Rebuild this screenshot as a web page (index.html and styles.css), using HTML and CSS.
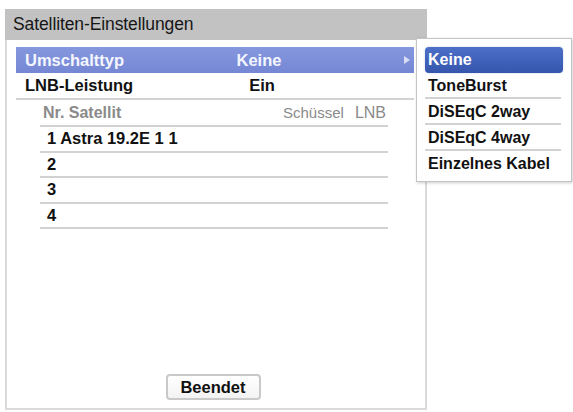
FILE: index.html
```html
<!DOCTYPE html>
<html lang="de">
<head>
<meta charset="utf-8">
<title>Satelliten-Einstellungen</title>
<link rel="stylesheet" href="styles.css">
</head>
<body>
<div class="screen">
  <div class="panel">
    <div class="title">Satelliten-Einstellungen</div>
    <div class="body">
      <div class="setting selected">
        <span class="label">Umschalttyp</span>
        <span class="value">Keine</span>
        <span class="arrow"></span>
      </div>
      <div class="setting divided">
        <span class="label">LNB-Leistung</span>
        <span class="value value-ein">Ein</span>
      </div>
      <div class="list">
        <div class="list-head">
          <span class="col-name">Nr. Satellit</span>
          <span class="col-dish">Schüssel</span>
          <span class="col-lnb">LNB</span>
        </div>
        <div class="list-row">1 Astra 19.2E 1 1</div>
        <div class="list-row">2</div>
        <div class="list-row">3</div>
        <div class="list-row">4</div>
      </div>
      <div class="actions">
        <button class="btn" type="button">Beendet</button>
      </div>
    </div>
  </div>
  <div class="menu">
    <div class="menu-item active">Keine</div>
    <div class="menu-item sep">ToneBurst</div>
    <div class="menu-item sep">DiSEqC 2way</div>
    <div class="menu-item sep">DiSEqC 4way</div>
    <div class="menu-item">Einzelnes Kabel</div>
  </div>
</div>
</body>
</html>
```
FILE: styles.css
```css
html, body {
  margin: 0;
  padding: 0;
  background: #ffffff;
}

body {
  font-family: "Liberation Sans", Arial, sans-serif;
  color: #111111;
}

.screen {
  position: relative;
  width: 573px;
  height: 412px;
  padding: 9px 0 0 5px;
  box-sizing: border-box;
}

.panel {
  width: 422px;
  height: 401px;
  display: flex;
  flex-direction: column;
}

.title {
  height: 31px;
  line-height: 31px;
  background: #c2c2c2;
  padding-left: 8px;
  font-size: 17.5px;
  color: #161616;
  letter-spacing: -0.1px;
}

.body {
  flex: 1;
  display: flex;
  flex-direction: column;
  border: 2px solid #dadada;
  border-top: 0;
  padding: 7px 11px 0 9px;
}

.setting {
  display: flex;
  align-items: center;
  height: 26px;
  padding-left: 9px;
  font-size: 16.5px;
  font-weight: bold;
}

.setting.divided {
  height: 25px;
  border-bottom: 2px solid #d2d2d2;
}

.setting.selected {
  background: linear-gradient(#8598de, #7587d4);
  color: #f4f6ff;
  padding-right: 4px;
}

.label {
  width: 188px;
}

.value {
  width: 92px;
  text-align: center;
}

.value-ein {
  padding-left: 6px;
  box-sizing: border-box;
}

.arrow {
  margin-left: auto;
  width: 0;
  height: 0;
  border-top: 4px solid transparent;
  border-bottom: 4px solid transparent;
  border-left: 6px solid #d8def4;
}

.list {
  margin: 0 26px 0 24px;
  font-size: 16.5px;
  font-weight: bold;
}

.list-head {
  display: flex;
  align-items: center;
  height: 25px;
  padding: 0 2px 0 3px;
  border-bottom: 2px solid #d2d2d2;
  color: #8a8a8a;
  font-size: 16px;
  font-weight: bold;
}

.col-name {
  flex: 1;
}

.col-dish {
  margin-right: 11px;
  font-weight: normal;
  font-size: 15px;
}

.col-lnb {
  font-weight: normal;
  font-size: 16px;
}

.list-row {
  height: 23.5px;
  line-height: 22px;
  padding-left: 7px;
  border-bottom: 2px solid #d2d2d2;
}

.actions {
  margin-top: auto;
  display: flex;
  justify-content: center;
  padding: 0 4px 8px 0;
}

.btn {
  width: 95px;
  height: 26px;
  border: 2px solid #c9c9c9;
  border-radius: 4px;
  background: linear-gradient(#ffffff, #f3f3f3);
  font-family: "Liberation Sans", Arial, sans-serif;
  font-size: 16.5px;
  font-weight: bold;
  color: #111111;
  padding: 0;
  line-height: 20px;
}

.menu {
  position: absolute;
  left: 416px;
  top: 38px;
  width: 156px;
  height: 144px;
  box-sizing: border-box;
  background: #ffffff;
  border: 1px solid #c4c4c4;
  box-shadow: 1px 1px 3px rgba(0, 0, 0, 0.2);
  padding: 8px 8px 0 8px;
}

.menu-item {
  height: 26px;
  line-height: 25px;
  padding-left: 3px;
  font-size: 16px;
  font-weight: bold;
  color: #111111;
}

.menu-item.sep {
  height: 24px;
  border-bottom: 2px solid #d2d2d2;
  margin-right: 2px;
}

.menu-item.active {
  background: linear-gradient(#4d6fc8, #3656ad);
  color: #ffffff;
  border-radius: 4px;
  box-shadow: 0 0 2px rgba(60, 90, 170, 0.35);
}
```
